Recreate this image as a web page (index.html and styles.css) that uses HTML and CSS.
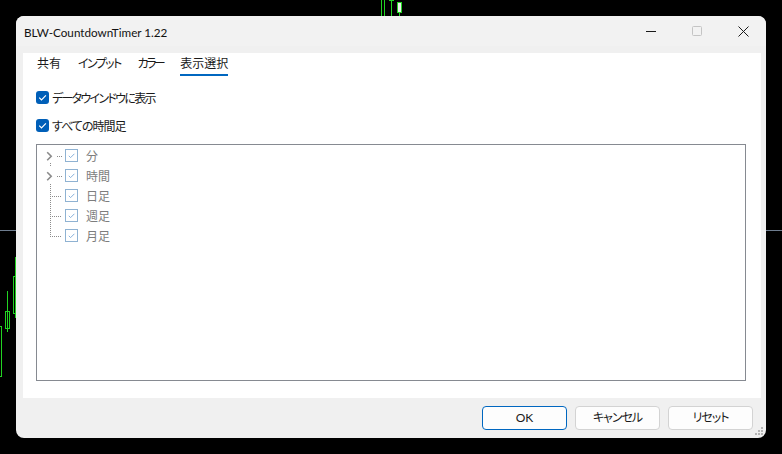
FILE: index.html
```html
<!DOCTYPE html>
<html lang="ja">
<head>
<meta charset="utf-8">
<title>BLW-CountdownTimer 1.22</title>
<link rel="stylesheet" href="styles.css">
</head>
<body>
<div class="desktop">
  <svg class="chart" width="782" height="454" viewBox="0 0 782 454" shape-rendering="crispEdges">
    <line x1="0" y1="230.5" x2="782" y2="230.5" class="hline"/>
    <g class="candle">
      <line x1="381.5" y1="0" x2="381.5" y2="16"/>
      <line x1="384.5" y1="0" x2="384.5" y2="16"/>
      <line x1="391.5" y1="0" x2="391.5" y2="16"/>
      <line x1="389" y1="0.5" x2="394" y2="0.5"/>
      <line x1="399.5" y1="12" x2="399.5" y2="16"/>
      <rect x="397.5" y="2.5" width="4" height="10" class="bull"/>
      <line x1="15.5" y1="257" x2="15.5" y2="318"/>
      <rect x="13.5" y="276.5" width="4" height="37"/>
      <line x1="7.5" y1="291" x2="7.5" y2="332"/>
      <rect x="5.5" y="311.5" width="4" height="17"/>
      <rect x="-2.5" y="326.5" width="4" height="50"/>
    </g>
  </svg>

  <div class="window">
    <div class="titlebar">
      <span class="title">BLW-CountdownTimer 1.22</span>
      <div class="controls">
        <span class="ctl"><svg width="10" height="10" viewBox="0 0 10 10" shape-rendering="crispEdges"><line x1="0" y1="5.5" x2="10" y2="5.5" stroke="#1a1a1a" stroke-width="1"/></svg></span>
        <span class="ctl"><svg width="10" height="10" viewBox="0 0 10 10"><rect x="0.5" y="0.5" width="9" height="9" rx="1" fill="none" stroke="#c4c4c4" stroke-width="1"/></svg></span>
        <span class="ctl"><svg width="11" height="11" viewBox="0 0 11 11"><path d="M0.5 0.5 L10.5 10.5 M10.5 0.5 L0.5 10.5" stroke="#1a1a1a" stroke-width="1" fill="none"/></svg></span>
      </div>
    </div>

    <div class="body">
      <div class="panel">
        <div class="tabs">
          <span class="tab">共有</span>
          <span class="tab kana">インプット</span>
          <span class="tab kana2">カラー</span>
          <span class="tab active">表示選択</span>
        </div>

        <div class="checks">
          <div class="check">
            <span class="cbox"><svg width="13" height="13" viewBox="0 0 13 13"><path d="M3.2 6.6 L5.5 8.9 L9.9 4.4" fill="none" stroke="#fff" stroke-width="1.2"/></svg></span>
            <span class="clabel wide">データウインドウに表示</span>
          </div>
          <div class="check">
            <span class="cbox"><svg width="13" height="13" viewBox="0 0 13 13"><path d="M3.2 6.6 L5.5 8.9 L9.9 4.4" fill="none" stroke="#fff" stroke-width="1.2"/></svg></span>
            <span class="clabel">すべての時間足</span>
          </div>
        </div>

        <div class="tree">
          <div class="row">
            <svg class="gutter" width="28" height="20" viewBox="0 0 28 20">
              <path d="M10.2 6.3 L14.2 10.3 L10.2 14.3" class="chev"/>
              <line x1="20" y1="10.5" x2="25" y2="10.5" class="dots" shape-rendering="crispEdges"/>
              <line x1="13.5" y1="17" x2="13.5" y2="21" class="dots" shape-rendering="crispEdges"/>
            </svg>
            <span class="tbox"><svg width="13" height="13" viewBox="0 0 13 13"><path d="M3.8 6.8 L5.6 8.6 L9.4 4.8" fill="none" stroke="#86b1dd" stroke-width="1"/></svg></span>
            <span class="tlabel">分</span>
          </div>
          <div class="row">
            <svg class="gutter" width="28" height="20" viewBox="0 0 28 20">
              <path d="M10.2 6.3 L14.2 10.3 L10.2 14.3" class="chev"/>
              <line x1="20" y1="10.5" x2="25" y2="10.5" class="dots" shape-rendering="crispEdges"/>
              <line x1="13.5" y1="18" x2="13.5" y2="20" class="dots" shape-rendering="crispEdges"/>
            </svg>
            <span class="tbox"><svg width="13" height="13" viewBox="0 0 13 13"><path d="M3.8 6.8 L5.6 8.6 L9.4 4.8" fill="none" stroke="#86b1dd" stroke-width="1"/></svg></span>
            <span class="tlabel">時間</span>
          </div>
          <div class="row">
            <svg class="gutter" width="28" height="20" viewBox="0 0 28 20" shape-rendering="crispEdges">
              <line x1="13.5" y1="0" x2="13.5" y2="20" class="dots"/>
              <line x1="15" y1="10.5" x2="25" y2="10.5" class="dots"/>
            </svg>
            <span class="tbox"><svg width="13" height="13" viewBox="0 0 13 13"><path d="M3.8 6.8 L5.6 8.6 L9.4 4.8" fill="none" stroke="#86b1dd" stroke-width="1"/></svg></span>
            <span class="tlabel">日足</span>
          </div>
          <div class="row">
            <svg class="gutter" width="28" height="20" viewBox="0 0 28 20" shape-rendering="crispEdges">
              <line x1="13.5" y1="0" x2="13.5" y2="20" class="dots"/>
              <line x1="15" y1="10.5" x2="25" y2="10.5" class="dots"/>
            </svg>
            <span class="tbox"><svg width="13" height="13" viewBox="0 0 13 13"><path d="M3.8 6.8 L5.6 8.6 L9.4 4.8" fill="none" stroke="#86b1dd" stroke-width="1"/></svg></span>
            <span class="tlabel">週足</span>
          </div>
          <div class="row">
            <svg class="gutter" width="28" height="20" viewBox="0 0 28 20" shape-rendering="crispEdges">
              <line x1="13.5" y1="0" x2="13.5" y2="11" class="dots"/>
              <line x1="15" y1="10.5" x2="25" y2="10.5" class="dots"/>
            </svg>
            <span class="tbox"><svg width="13" height="13" viewBox="0 0 13 13"><path d="M3.8 6.8 L5.6 8.6 L9.4 4.8" fill="none" stroke="#86b1dd" stroke-width="1"/></svg></span>
            <span class="tlabel">月足</span>
          </div>
        </div>
      </div>
    </div>

    <div class="footer">
      <button class="btn primary">OK</button>
      <button class="btn">キャンセル</button>
      <button class="btn">リセット</button>
    </div>

    <svg class="grip" width="10" height="9" viewBox="0 0 10 9" shape-rendering="crispEdges">
      <rect x="7" y="0" width="2" height="2"/>
      <rect x="4" y="3" width="2" height="2"/>
      <rect x="7" y="3" width="2" height="2"/>
      <rect x="1" y="6" width="2" height="2"/>
      <rect x="4" y="6" width="2" height="2"/>
      <rect x="7" y="6" width="2" height="2"/>
    </svg>
  </div>
</div>
</body>
</html>
```

FILE: styles.css
```css
* { box-sizing: border-box; }

html, body {
  margin: 0;
  padding: 0;
  background: #000;
}

.desktop {
  position: relative;
  width: 782px;
  height: 454px;
  overflow: hidden;
  background: #000;
  font-family: "Noto Sans", "Noto Sans CJK JP", sans-serif;
  font-size: 12px;
  color: #000;
}

.chart {
  position: absolute;
  left: 0;
  top: 0;
}

.hline { stroke: #6e7d8f; stroke-width: 1; }
.candle line, .candle rect { stroke: #22d422; stroke-width: 1; fill: none; }
.candle rect.bull { fill: #ececec; }

.window {
  position: absolute;
  left: 16px;
  top: 16px;
  width: 750px;
  height: 422px;
  background: #f0f0f0;
  border-radius: 8px;
  overflow: hidden;
  display: flex;
  flex-direction: column;
}

.titlebar {
  height: 30px;
  display: flex;
  align-items: center;
  background: #f2f2f2;
  flex: none;
}

.title {
  padding-left: 8px;
  padding-top: 1px;
  font-family: "Lato", "Noto Sans", sans-serif;
  font-size: 11.7px;
  color: #111;
  flex: 1;
}

.controls {
  display: flex;
  height: 30px;
}

.ctl {
  width: 46px;
  height: 30px;
  display: flex;
  align-items: center;
  justify-content: center;
}

.body {
  flex: 1;
  padding: 7px 5px 0 7px;
  display: flex;
  min-height: 0;
}

.panel {
  flex: 1;
  background: #fff;
  display: flex;
  flex-direction: column;
  padding: 0 15px 17px 13px;
}

.tabs {
  display: flex;
  gap: 17px;
  padding-left: 1px;
  padding-top: 2px;
  font-family: "Noto Sans CJK JP", sans-serif;
  font-feature-settings: "palt";
  font-size: 12px;
  line-height: 16px;
}

.tab {
  padding-bottom: 3px;
  border-bottom: 2px solid transparent;
  color: #1a1a1a;
}

.tab.kana { letter-spacing: -1.6px; }
.tab.kana2 { letter-spacing: -2.6px; }

.tab.active {
  border-bottom-color: #0067c0;
}

.checks {
  display: flex;
  flex-direction: column;
  gap: 11px;
  margin-top: 13px;
}

.check {
  display: flex;
  align-items: center;
  height: 17px;
  gap: 3px;
  font-family: "Noto Sans CJK JP", sans-serif;
  font-feature-settings: "palt";
  font-size: 12px;
  color: #1a1a1a;
}

.cbox {
  width: 13px;
  height: 13px;
  border-radius: 3px;
  background: #005fb8;
  display: flex;
}

.clabel { line-height: 17px; letter-spacing: -1px; }
.clabel.wide { letter-spacing: -1.7px; }

.tree {
  flex: 1;
  margin-top: 10px;
  border: 1px solid #868a91;
  padding-top: 1px;
  display: flex;
  flex-direction: column;
}

.row {
  display: flex;
  height: 20px;
  align-items: flex-start;
}

.gutter { flex: none; }

.chev { fill: none; stroke: #8a8a8a; stroke-width: 1.6; }
.dots { stroke: #8c8c8c; stroke-width: 1; stroke-dasharray: 1 1; }

.tbox {
  margin-top: 3px;
  width: 13px;
  height: 13px;
  border: 1px solid #8fb2d2;
  background: #fff;
  display: flex;
  justify-content: center;
  align-items: center;
}

.tbox svg { flex: none; }

.tlabel {
  margin-left: 8px;
  line-height: 20px;
  font-family: "Noto Sans CJK JP", sans-serif;
  font-size: 12px;
  color: #7d7d7d;
}

.footer {
  height: 40px;
  flex: none;
  display: flex;
  justify-content: flex-end;
  align-items: center;
  gap: 8px;
  padding-right: 13px;
}

.btn {
  width: 85px;
  height: 24px;
  border: 1px solid #d3d3d3;
  border-radius: 4px;
  background: #fdfdfd;
  font-family: "Lato", "Noto Sans CJK JP", sans-serif;
  font-feature-settings: "palt";
  font-size: 12px;
  letter-spacing: -1px;
  color: #1a1a1a;
  padding: 0;
  line-height: 20px;
}

.btn.primary {
  border-color: #0067c0;
  letter-spacing: 0;
}

.grip {
  position: absolute;
  right: 2px;
  bottom: 2px;
  fill: #b5b5b5;
}
```
